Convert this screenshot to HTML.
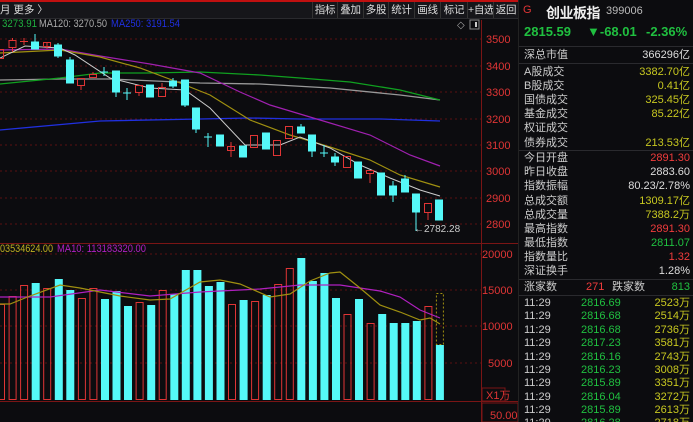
<!DOCTYPE html>
<html><head><meta charset="utf-8"><style>
*{margin:0;padding:0;box-sizing:border-box}
html,body{width:693px;height:422px}
body{background:#0c0c0f;overflow:hidden;position:relative;font-family:"Liberation Sans","Noto Sans CJK SC",sans-serif;color:#ccc}
.tb{position:absolute;left:0;top:2px;width:518px;height:17px;background:#16161a;border-bottom:1px solid #2a2a2e;font-size:10.5px}
.btn{position:absolute;top:0;height:16px;line-height:16px;border-left:1px solid #333;text-align:center;color:#ddd;white-space:nowrap;overflow:hidden;letter-spacing:-0.3px}
.rp{position:absolute;left:518px;top:0;width:175px;height:422px;background:#0c0c0f;border-left:1px solid #222;font-size:11px;overflow:hidden}
.row{position:absolute;left:5px;width:166px;height:14px;line-height:14px;white-space:nowrap}
.row .v{position:absolute;right:0;top:0}
.y{color:#c8c820}.r{color:#f03c3c}.g{color:#20c040}.w{color:#ddd}
.hl{position:absolute;left:0;width:175px;height:1px;background:#2a2a2e}
</style></head><body>
<div style="position:absolute;left:0;top:0;width:518px;height:2px;background:#c01010"></div>
<div class="tb">
<span style="position:absolute;left:0;top:0;line-height:16px;color:#ddd">月 更多 〉</span>
<div class="btn" style="left:312px;width:25px">指标</div>
<div class="btn" style="left:337px;width:26px">叠加</div>
<div class="btn" style="left:363px;width:25px">多股</div>
<div class="btn" style="left:388px;width:26px">统计</div>
<div class="btn" style="left:414px;width:26px">画线</div>
<div class="btn" style="left:440px;width:27px">标记</div>
<div class="btn" style="left:467px;width:26px">+自选</div>
<div class="btn" style="left:493px;width:25px">返回</div>
</div>
<svg style="position:absolute;left:0;top:0" width="518" height="422" font-family="Liberation Sans" font-size="11">
<text x="2" y="27" fill="#20b040" textLength="35" lengthAdjust="spacingAndGlyphs">3273.91</text>
<text x="39" y="27" fill="#aaa" textLength="68" lengthAdjust="spacingAndGlyphs">MA120: 3270.50</text>
<text x="111" y="27" fill="#2030e0" textLength="69" lengthAdjust="spacingAndGlyphs">MA250: 3191.54</text>
<text x="457" y="28" fill="#aaa" font-size="10">◇</text>
<rect x="470" y="20" width="9" height="9" fill="none" stroke="#888"/><rect x="475" y="22" width="2" height="5" fill="#ccc"/>
<g stroke="#5a1010" stroke-dasharray="2,3">
<line x1="0" y1="39" x2="481" y2="39"/><line x1="0" y1="66" x2="481" y2="66"/><line x1="0" y1="92" x2="481" y2="92"/><line x1="0" y1="119" x2="481" y2="119"/><line x1="0" y1="145" x2="481" y2="145"/><line x1="0" y1="171" x2="481" y2="171"/><line x1="0" y1="198" x2="481" y2="198"/><line x1="0" y1="224" x2="481" y2="224"/>
<line x1="0" y1="254" x2="481" y2="254"/><line x1="0" y1="290" x2="481" y2="290"/><line x1="0" y1="326" x2="481" y2="326"/><line x1="0" y1="363" x2="481" y2="363"/>
</g>
<line x1="481.5" y1="20" x2="481.5" y2="422" stroke="#7a1515"/>
<line x1="0" y1="243.5" x2="518" y2="243.5" stroke="#7a1515"/>
<line x1="0" y1="401.5" x2="518" y2="401.5" stroke="#7a1515"/>
<g fill="#e03535" font-size="11">
<text x="486" y="43">3500</text><text x="486" y="70">3400</text><text x="486" y="96">3300</text><text x="486" y="123">3200</text><text x="486" y="149">3100</text><text x="486" y="175">3000</text><text x="486" y="202">2900</text><text x="486" y="228">2800</text>
<text x="482" y="258">20000</text><text x="482" y="294">15000</text><text x="482" y="330">10000</text><text x="488" y="367">5000</text>
<text x="486" y="399">X1万</text><text x="490" y="419">50.00</text>
</g>
<rect x="482" y="388" width="23" height="13" fill="none" stroke="#7a1515"/>
<rect x="482" y="403" width="36" height="19" fill="none" stroke="#7a1515"/>
<polyline fill="none" stroke="#2030e0" stroke-width="1.3" points="0,130 100,121 200,119 250,118 300,119 380,119 440,121"/>
<polyline fill="none" stroke="#999" stroke-width="1.3" points="0,80 60,79 110,79 200,83 260,84 330,88 400,95 440,100"/>
<polyline fill="none" stroke="#10a020" stroke-width="1.3" points="0,84 60,78 100,73 150,73 200,72 260,75 300,78 350,82 400,90 440,100"/>
<polyline fill="none" stroke="#a020b0" stroke-width="1.2" points="0,50 60,49 100,56 150,64 200,73 240,92 270,105 320,120 370,135 410,155 440,166"/>
<polyline fill="none" stroke="#a09010" stroke-width="1.2" points="0,53 60,50 100,57 140,68 180,83 210,95 250,120 290,135 330,147 370,160 400,175 440,187"/>
<polyline fill="none" stroke="#ccc" stroke-width="1" points="0,58 25,46 60,48 75,55 110,78 150,88 185,90 210,108 245,145 280,145 300,137 330,148 360,165 390,178 420,190 440,196"/>
<g stroke="#55f8f8" fill="#55f8f8">
<line x1="35" y1="34" x2="35" y2="49"/><rect x="31.5" y="42" width="7" height="7"/>
<line x1="58" y1="43" x2="58" y2="58"/><rect x="54.5" y="45" width="7" height="11"/>
<line x1="70" y1="57" x2="70" y2="83"/><rect x="66.5" y="60" width="7" height="23"/>
<line x1="104" y1="67" x2="104" y2="76"/><line x1="100" y1="72" x2="108" y2="72"/>
<line x1="116" y1="71" x2="116" y2="97"/><rect x="112.5" y="71" width="7" height="21"/>
<line x1="127" y1="88" x2="127" y2="100"/><line x1="123" y1="93" x2="131" y2="93"/>
<rect x="146.5" y="85" width="7" height="12"/>
<line x1="173" y1="78" x2="173" y2="88"/><rect x="169.5" y="81" width="7" height="5"/>
<line x1="185" y1="80" x2="185" y2="107"/><rect x="181.5" y="80" width="7" height="25"/>
<line x1="196" y1="108" x2="196" y2="133"/><rect x="192.5" y="108" width="7" height="21"/>
<line x1="208" y1="133" x2="208" y2="147"/><line x1="204" y1="137" x2="212" y2="137"/>
<rect x="216.5" y="135" width="7" height="11"/>
<rect x="239.5" y="146" width="7" height="11"/>
<rect x="262.5" y="133" width="7" height="16"/>
<line x1="301" y1="124" x2="301" y2="133"/><rect x="297.5" y="127" width="7" height="6"/>
<line x1="312" y1="135" x2="312" y2="157"/><rect x="308.5" y="135" width="7" height="16"/>
<line x1="324" y1="145" x2="324" y2="157"/><line x1="320" y1="153" x2="328" y2="153"/>
<line x1="335" y1="153" x2="335" y2="166"/><rect x="331.5" y="157" width="7" height="5"/>
<rect x="354.5" y="162" width="7" height="16"/>
<rect x="377.5" y="173" width="7" height="22"/>
<line x1="393" y1="181" x2="393" y2="202"/><rect x="389.5" y="186" width="7" height="9"/>
<line x1="405" y1="175" x2="405" y2="192"/><rect x="401.5" y="179" width="7" height="13"/>
<line x1="416" y1="194" x2="416" y2="231"/><rect x="412.5" y="194" width="7" height="18"/>
<rect x="435.5" y="200" width="7" height="20"/>
</g>
<g stroke="#e03535" fill="none">
<rect x="-2.5" y="49.5" width="6" height="9"/>
<line x1="12.5" y1="38" x2="12.5" y2="52"/><rect x="9" y="40.5" width="7" height="7" fill="#0c0c0f"/>
<line x1="24" y1="38" x2="24" y2="45"/><line x1="20" y1="41.5" x2="28" y2="41.5"/>
<line x1="47" y1="42" x2="47" y2="49"/><rect x="43.5" y="42.5" width="7" height="4"/>
<line x1="81" y1="85" x2="81" y2="90"/><rect x="77.5" y="78.5" width="7" height="7"/>
<line x1="93" y1="72" x2="93" y2="74"/><rect x="89.5" y="74.5" width="7" height="3"/>
<line x1="139" y1="92" x2="139" y2="96"/><rect x="135.5" y="85.5" width="7" height="7"/>
<line x1="162" y1="83" x2="162" y2="87"/><rect x="158.5" y="87.5" width="7" height="9"/>
<line x1="231" y1="142" x2="231" y2="157"/><rect x="227.5" y="146.5" width="7" height="4"/>
<rect x="250.5" y="135.5" width="7" height="12"/>
<rect x="273.5" y="140.5" width="7" height="15"/>
<rect x="285.5" y="126.5" width="7" height="12"/>
<rect x="343.5" y="156.5" width="7" height="11"/>
<line x1="370" y1="173" x2="370" y2="183"/><rect x="366.5" y="170.5" width="7" height="3"/>
<line x1="428" y1="212" x2="428" y2="220"/><rect x="424.5" y="203.5" width="7" height="9"/>
</g>
<text x="414" y="232" fill="#ccc" font-size="10">←2782.28</text>
<text x="0" y="252" fill="#c0b020" textLength="53" lengthAdjust="spacingAndGlyphs">03534624.00</text>
<text x="57" y="252" fill="#b020c0" textLength="89" lengthAdjust="spacingAndGlyphs">MA10: 113183320.00</text>
<g fill="#55f8f8">
<rect x="31.7" y="283" width="8" height="117"/><rect x="54.8" y="279" width="8" height="121"/><rect x="66.3" y="290" width="8" height="110"/>
<rect x="101" y="299" width="8" height="101"/><rect x="112.5" y="291" width="8" height="109"/><rect x="124" y="306" width="8" height="94"/>
<rect x="147.2" y="305" width="8" height="95"/><rect x="170.3" y="294" width="8" height="106"/><rect x="181.8" y="270" width="8" height="130"/>
<rect x="193.4" y="270" width="8" height="130"/><rect x="204.9" y="286" width="8" height="114"/><rect x="216.5" y="282" width="8" height="118"/>
<rect x="239.6" y="300" width="8" height="100"/><rect x="262.7" y="295" width="8" height="105"/><rect x="297.3" y="258" width="8" height="142"/>
<rect x="308.9" y="281" width="8" height="119"/><rect x="320.4" y="273" width="8" height="127"/><rect x="332" y="298" width="8" height="102"/>
<rect x="355" y="299" width="8" height="101"/><rect x="378.2" y="314" width="8" height="86"/><rect x="389.7" y="323" width="8" height="77"/>
<rect x="401.3" y="323" width="8" height="77"/><rect x="412.8" y="321" width="8" height="79"/><rect x="435.9" y="345" width="8" height="55"/>
</g>
<g fill="none" stroke="#e03535">
<rect x="-2.5" y="304.5" width="7" height="95"/><rect x="9.1" y="296.5" width="7" height="103"/><rect x="20.6" y="285.5" width="7" height="114"/>
<rect x="43.7" y="288.5" width="7" height="111"/><rect x="78.4" y="298.5" width="7" height="101"/><rect x="89.9" y="288.5" width="7" height="111"/>
<rect x="136.1" y="302.5" width="7" height="97"/><rect x="159.2" y="290.5" width="7" height="109"/><rect x="228.5" y="304.5" width="7" height="95"/>
<rect x="251.6" y="301.5" width="7" height="98"/><rect x="274.7" y="284.5" width="7" height="115"/><rect x="286.3" y="268.5" width="7" height="131"/>
<rect x="344" y="314.5" width="7" height="85"/><rect x="367.1" y="323.5" width="7" height="76"/><rect x="424.9" y="306.5" width="7" height="93"/>
</g>
<rect x="436.4" y="293.5" width="7" height="51" fill="none" stroke="#a09010" stroke-dasharray="2,2"/>
<polyline fill="none" stroke="#b020c0" stroke-width="1.2" points="0,297 50,297 100,290 150,296 200,292 260,289 300,285 340,285 380,291 400,297 420,310 440,318"/>
<polyline fill="none" stroke="#a09010" stroke-width="1.2" points="0,304 10,304 30,296 60,285 80,288 120,296 150,300 170,299 200,282 220,280 240,284 270,297 290,294 310,281 330,273 340,272 360,288 380,305 400,312 420,320 430,318 440,324"/>
</svg>
<div class="rp">
<div style="position:absolute;left:4px;top:4px;color:#e03535;font-size:11px">G</div>
<div style="position:absolute;left:27px;top:3px;color:#eee;font-size:14px;font-weight:bold;letter-spacing:-0.5px">创业板指</div>
<div style="position:absolute;left:87px;top:5px;color:#bbb;font-size:11px">399006</div>
<div style="position:absolute;left:5px;top:24px;color:#20c040;font-size:13px;font-weight:bold">2815.59</div>
<div style="position:absolute;left:68px;top:24px;color:#20c040;font-size:13px;font-weight:bold">▼-68.01</div>
<div style="position:absolute;left:127px;top:24px;color:#20c040;font-size:13px;font-weight:bold">-2.36%</div>
<div class="hl" style="top:46px"></div>
<div class="row" style="top:48px">深总市值<span class="v w">366296亿</span></div>
<div class="hl" style="top:63px"></div>
<div class="row" style="top:65px"> A股成交<span class="v y">3382.70亿</span></div>
<div class="row" style="top:79px"> B股成交<span class="v y">0.41亿</span></div>
<div class="row" style="top:93px">国债成交<span class="v y">325.45亿</span></div>
<div class="row" style="top:107px">基金成交<span class="v y">85.22亿</span></div>
<div class="row" style="top:121px">权证成交</div>
<div class="row" style="top:136px">债券成交<span class="v y">213.53亿</span></div>
<div class="hl" style="top:150px"></div>
<div class="row" style="top:151px">今日开盘<span class="v r">2891.30</span></div>
<div class="row" style="top:165px">昨日收盘<span class="v w">2883.60</span></div>
<div class="row" style="top:179px">指数振幅<span class="v w">80.23/2.78%</span></div>
<div class="row" style="top:194px">总成交额<span class="v y">1309.17亿</span></div>
<div class="row" style="top:208px">总成交量<span class="v y">7388.2万</span></div>
<div class="row" style="top:222px">最高指数<span class="v r">2891.30</span></div>
<div class="row" style="top:236px">最低指数<span class="v g">2811.07</span></div>
<div class="row" style="top:250px">指数量比<span class="v r">1.32</span></div>
<div class="row" style="top:264px">深证换手<span class="v w">1.28%</span></div>
<div class="hl" style="top:279px"></div>
<div class="row" style="top:280px">涨家数<span style="position:absolute;left:62px" class="r">271</span><span style="position:absolute;left:88px">跌家数</span><span class="v g">813</span></div>
<div class="hl" style="top:295px"></div>
<div class="row" style="top:296px">11:29<span style="position:absolute;left:57px" class="g">2816.69</span><span class="v y">2523万</span></div>
<div class="row" style="top:309px">11:29<span style="position:absolute;left:57px" class="g">2816.68</span><span class="v y">2514万</span></div>
<div class="row" style="top:323px">11:29<span style="position:absolute;left:57px" class="g">2816.68</span><span class="v y">2736万</span></div>
<div class="row" style="top:336px">11:29<span style="position:absolute;left:57px" class="g">2817.23</span><span class="v y">3581万</span></div>
<div class="row" style="top:350px">11:29<span style="position:absolute;left:57px" class="g">2816.16</span><span class="v y">2743万</span></div>
<div class="row" style="top:363px">11:29<span style="position:absolute;left:57px" class="g">2816.23</span><span class="v y">3008万</span></div>
<div class="row" style="top:376px">11:29<span style="position:absolute;left:57px" class="g">2815.89</span><span class="v y">3351万</span></div>
<div class="row" style="top:390px">11:29<span style="position:absolute;left:57px" class="g">2816.04</span><span class="v y">3272万</span></div>
<div class="row" style="top:403px">11:29<span style="position:absolute;left:57px" class="g">2815.89</span><span class="v y">2613万</span></div>
<div class="row" style="top:416px">11:29<span style="position:absolute;left:57px" class="g">2816.28</span><span class="v y">2718万</span></div>
</div>
</body></html>
